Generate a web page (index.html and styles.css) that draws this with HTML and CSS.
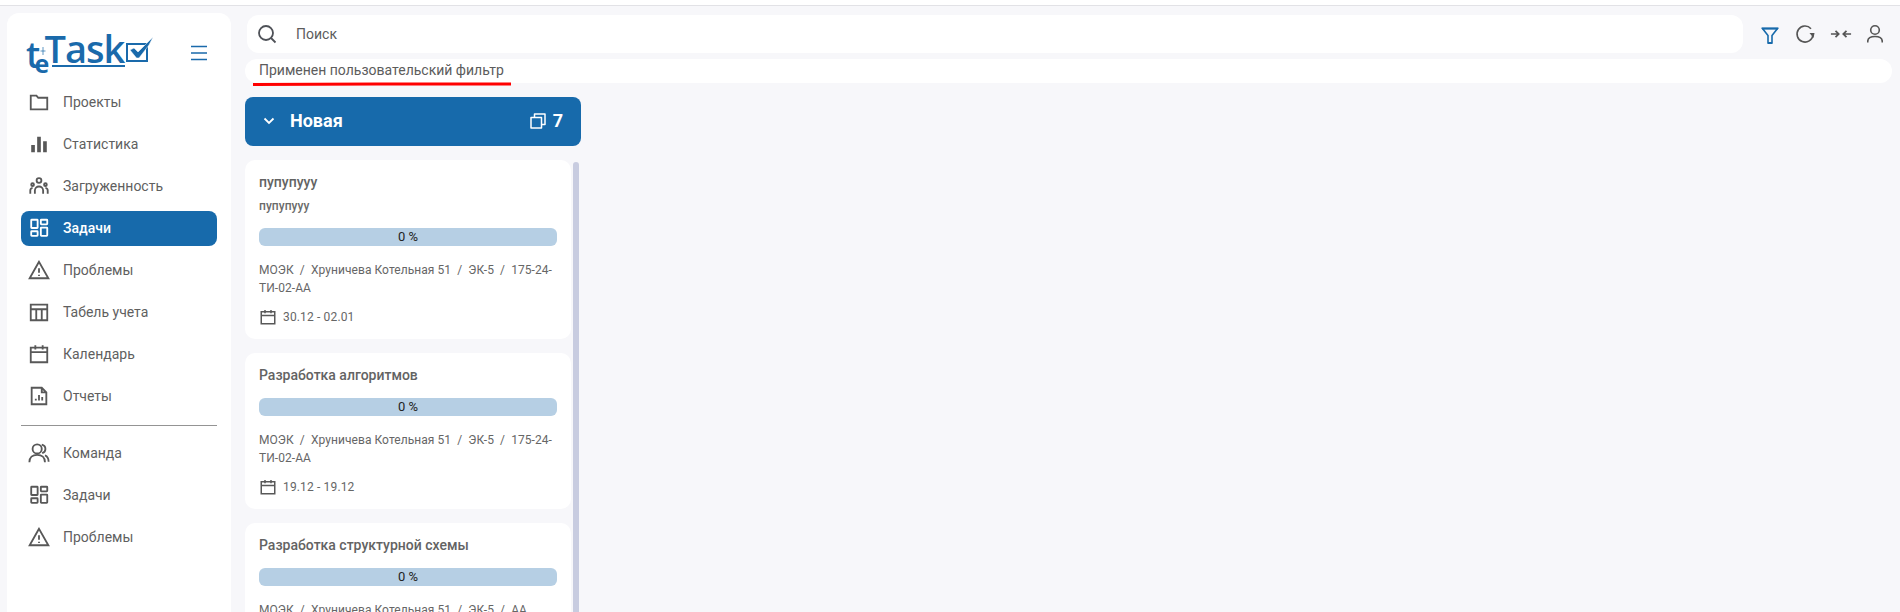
FILE: index.html
```html
<!DOCTYPE html>
<html lang="en">
<head>
<meta charset="UTF-8">
<meta name="viewport" content="width=device-width, initial-scale=1.0">
<title>teTask</title>
<link rel="stylesheet" href="styles.css">
</head>
<body>

<!-- Shared icons -->
<svg class="sprite" xmlns="http://www.w3.org/2000/svg">
  <symbol id="i-folder" viewBox="0 0 24 24"><path d="M3 5h6.200l2 2.400H21V20H3z"/></symbol>
  <symbol id="i-stats" viewBox="0 0 24 24"><path class="solid" d="M3.500 13h4v8h-4zM10 4h4v17h-4zM16.500 9h4v12h-4z"/></symbol>
  <symbol id="i-load" viewBox="0 0 24 24"><circle cx="12" cy="6" r="2.600"/><circle cx="5" cy="10.500" r="1.500"/><circle cx="19" cy="10.500" r="1.500"/><path d="M7.500 20.500v-3.500a4.500 4.500 0 0 1 9 0v3.500M2.500 20.500V17a3 3 0 0 1 2.500-3M21.500 20.500V17a3 3 0 0 0-2.500-3"/></symbol>
  <symbol id="i-tasks" viewBox="0 0 24 24"><rect x="3.500" y="3" width="7" height="9" rx=".6"/><rect x="14" y="3" width="7" height="5" rx=".6"/><rect x="3.500" y="15.500" width="7" height="5" rx=".6"/><rect x="14" y="11.500" width="7" height="9" rx=".6"/></symbol>
  <symbol id="i-warn" viewBox="0 0 24 24"><path d="M12 3 1.800 21h20.400z"/><path d="M12 10v5M12 17.200v1.300"/></symbol>
  <symbol id="i-table" viewBox="0 0 24 24"><path d="M3 4h18v17H3zM3 9h18M9 9v12M15 9v12"/></symbol>
  <symbol id="i-cal" viewBox="0 0 24 24"><path d="M3 5h18v16H3zM3 10h18M8 2.500V7M16 2.500V7"/></symbol>
  <symbol id="i-report" viewBox="0 0 24 24"><path d="M4 3h11l5 5v13H4zM15 3v5h5"/><path d="M8.500 17v-2M12 17v-6M15.500 17v-4"/></symbol>
  <symbol id="i-team" viewBox="0 0 24 24"><circle cx="10" cy="7.500" r="5"/><path d="M1.500 22c0-5 3.500-8 8.500-8s8.500 3 8.500 8M15 2.800c2.500.6 4 2.500 4 4.700s-1.500 4-3.500 4.700M18.500 14.500c2.500 1 4 3.800 4 7"/></symbol>
</svg>

<!-- Top strip -->
<div class="topline"></div>

<div class="app">

  <!-- Sidebar -->
  <aside class="sidebar">
    <div class="brand">
      <svg class="logo" viewBox="0 0 130 46" width="130" height="46">
        <text><tspan class="logo-t" x="1" y="37">t</tspan><tspan class="logo-e" x="9.500" y="41.500">e</tspan><tspan class="logo-task" x="19.500" y="32">Task</tspan></text>
        <path class="logo-spark" d="M18 16v8M15.500 20h5"/>
        <path class="logo-line" d="M27 35h73"/>
        <path class="logo-box" d="M102 13h20v17h-20z"/>
        <path class="logo-check" d="M105 19l4-2 4 4 15-15-4 8-10 13h-2.500z"/>
      </svg>
      <svg class="burger" viewBox="0 0 16 16" width="16" height="16"><path d="M0 1.500h16M0 8h16M0 14.500h16"/></svg>
    </div>

    <nav class="menu">
      <a class="menu-item"><svg class="icon"><use href="#i-folder"/></svg>Проекты</a>
      <a class="menu-item"><svg class="icon"><use href="#i-stats"/></svg>Статистика</a>
      <a class="menu-item"><svg class="icon"><use href="#i-load"/></svg>Загруженность</a>
      <a class="menu-item active"><svg class="icon"><use href="#i-tasks"/></svg>Задачи</a>
      <a class="menu-item"><svg class="icon"><use href="#i-warn"/></svg>Проблемы</a>
      <a class="menu-item"><svg class="icon"><use href="#i-table"/></svg>Табель учета</a>
      <a class="menu-item"><svg class="icon"><use href="#i-cal"/></svg>Календарь</a>
      <a class="menu-item"><svg class="icon"><use href="#i-report"/></svg>Отчеты</a>
    </nav>
    <hr class="menu-divider">
    <nav class="menu">
      <a class="menu-item"><svg class="icon"><use href="#i-team"/></svg>Команда</a>
      <a class="menu-item"><svg class="icon"><use href="#i-tasks"/></svg>Задачи</a>
      <a class="menu-item"><svg class="icon"><use href="#i-warn"/></svg>Проблемы</a>
    </nav>
  </aside>

  <!-- Main area -->
  <main class="main">
    <div class="toolbar">
      <div class="search">
        <svg class="search-icon" viewBox="0 0 20 20" width="20" height="20"><circle cx="9" cy="9" r="7"/><path d="m14 14 4.500 4.500"/></svg>
        <span>Поиск</span>
      </div>
      <div class="tools">
        <svg class="tool tool-blue" viewBox="0 0 20 20"><path d="M2.500 4.500h15L12 11.500V19H8v-7.500z"/><path class="tool-thick" d="M2 4.500h16M8 19h4"/></svg>
        <svg class="tool" viewBox="0 0 20 20"><path d="M18 11A8 8 0 1 1 16 4.700"/><path class="solid" d="M14.500 9h5l-1 5z"/></svg>
        <svg class="tool tool-wide" viewBox="0 0 24 20"><path d="M1 10h8M6 6.500 9.500 10 6 13.500M23 10h-8M18 6.500 14.500 10l3.500 3.500"/></svg>
        <svg class="tool tool-user" viewBox="0 0 16 20"><circle cx="8" cy="6" r="4.300"/><path d="M.75 18.500v-1c0-3 2.800-5 7.250-5s7.250 2 7.250 5v1"/></svg>
      </div>
    </div>

    <div class="filter-note">
      <span>Применен пользовательский фильтр</span>
      <svg class="red-line" viewBox="0 0 258 4" width="258" height="4"><path d="M0 2.500C80 2 180 2 258 2"/></svg>
    </div>

    <section class="column">
      <header class="column-head">
        <svg class="chevron" viewBox="0 0 12 8" width="12" height="8"><path d="m1.500 1.500 4.500 4.500 4.500-4.500"/></svg>
        <span class="column-title">Новая</span>
        <svg class="copies" viewBox="0 0 16 16" width="16" height="16"><path d="M1 4.500h10.500V15H1zM4.500 4.500V1H15v10.500h-3.500"/></svg>
        <span class="column-count">7</span>
      </header>

      <div class="column-body">
        <div class="cards">
          <article class="card">
            <h3>пупупууу</h3>
            <p class="card-sub">пупупууу</p>
            <div class="progress">0 %</div>
            <p class="card-path">МОЭК &nbsp;/&nbsp; Хруничева Котельная 51 &nbsp;/&nbsp; ЭК-5 &nbsp;/&nbsp; 175-24-ТИ-02-АА</p>
            <div class="card-date"><svg class="icon-sm"><use href="#i-cal"/></svg>30.12 - 02.01</div>
          </article>
          <article class="card">
            <h3>Разработка алгоритмов</h3>
            <div class="progress">0 %</div>
            <p class="card-path">МОЭК &nbsp;/&nbsp; Хруничева Котельная 51 &nbsp;/&nbsp; ЭК-5 &nbsp;/&nbsp; 175-24-ТИ-02-АА</p>
            <div class="card-date"><svg class="icon-sm"><use href="#i-cal"/></svg>19.12 - 19.12</div>
          </article>
          <article class="card">
            <h3>Разработка структурной схемы</h3>
            <div class="progress">0 %</div>
            <p class="card-path">МОЭК &nbsp;/&nbsp; Хруничева Котельная 51 &nbsp;/&nbsp; ЭК-5 &nbsp;/&nbsp; АА</p>
          </article>
        </div>
        <div class="scrollbar"></div>
      </div>
    </section>
  </main>
</div>

</body>
</html>
```

FILE: styles.css
```css
/* Reset */
* {
  margin: 0;
  padding: 0;
  box-sizing: border-box;
}
html, body {
  height: 612px;
  overflow: hidden;
  font-family: Roboto, "Liberation Sans", sans-serif;
  font-size: 14px;
  color: #5c5c5c;
  background: #f7f7fa;
}
.sprite {
  position: absolute;
  width: 0;
  height: 0;
}
svg {
  fill: none;
  stroke: currentColor;
  stroke-width: 2;
  display: block;
}
svg .solid {
  fill: currentColor;
  stroke: none;
}

.topline {
  height: 6px;
  background: #fff;
  border-bottom: 1px solid #e2e2e6;
}
.app {
  display: flex;
  height: 606px;
  padding: 7px 8px 0 7px;
}

/* Sidebar */
.sidebar {
  width: 224px;
  flex-shrink: 0;
  padding: 0 14px;
  background: #fff;
  border-radius: 12px 12px 0 0;
}
.brand {
  display: flex;
  align-items: flex-start;
  height: 72px;
  padding: 18px 10px 0 4px;
  justify-content: space-between;
}
.logo {
  overflow: visible;
  color: #1a6aab;
}
.logo text {
  fill: #1a6aab;
  stroke: none;
  font-family: "Open Sans", sans-serif;
}
.logo-t { font-size: 36px; font-weight: 600; }
.logo-e { font-size: 25px; font-weight: 700; }
.logo-task { font-size: 38px; font-weight: 600; letter-spacing: -1px; }
.logo-spark { stroke-width: .7; }
.logo-check { fill: #1a6aab; stroke: #fff; stroke-width: .5; }
.burger {
  margin-top: 14px;
  color: #1a6aab;
  stroke-width: 1.600;
}
.menu {
  display: flex;
  flex-direction: column;
  gap: 7px;
}
.menu-item {
  display: flex;
  align-items: center;
  height: 35px;
  padding: 0 0 1px 7px;
  border-radius: 8px;
  color: #5f5f5f;
}
.menu-item.active {
  background: #176aab;
  color: #fff;
  font-weight: 500;
}
.icon {
  width: 22px;
  height: 22px;
  margin-right: 13px;
  flex-shrink: 0;
  color: #585858;
}
.active .icon {
  color: #fff;
}
.menu-divider {
  margin: 11px 0 10px;
  border: 0;
  border-top: 1px solid #949494;
}

/* Toolbar */
.main {
  flex: 1;
  margin-left: 14px;
  min-width: 0;
}
.toolbar {
  display: flex;
  align-items: center;
  height: 38px;
  margin-top: 2px;
  padding-left: 2px;
}
.search {
  display: flex;
  align-items: center;
  flex: 1;
  height: 38px;
  padding-left: 10px;
  background: #fff;
  border-radius: 12px;
  color: #5c5c5c;
}
.search-icon {
  margin-right: 19px;
  color: #4e5157;
  stroke-width: 1.800;
}
.tools {
  display: flex;
  align-items: center;
  gap: 15px;
  width: 149px;
  padding-left: 17px;
  color: #555;
}
.tool {
  width: 20px;
  height: 20px;
  stroke-width: 1.600;
}
.tool-wide {
  width: 22px;
  stroke-width: 1.900;
}
.tool-user {
  width: 16px;
}
.tool-blue {
  color: #176aab;
}
.tool-thick {
  stroke-width: 2.200;
}

/* Filter note */
.filter-note {
  position: relative;
  height: 24px;
  margin-top: 6px;
  padding-left: 14px;
  line-height: 23px;
  background: #fff;
  border-radius: 12px;
}
.red-line {
  position: absolute;
  left: 8px;
  top: 23px;
  color: #f00;
  stroke-width: 3;
}

/* Column */
.column {
  width: 336px;
  margin-top: 14px;
}
.column-head {
  display: flex;
  align-items: center;
  height: 49px;
  padding: 0 18px 2px 18px;
  background: #176aab;
  border-radius: 8px;
  color: #fff;
}
.chevron {
  stroke-width: 1.800;
  margin-right: 15px;
}
.column-title {
  flex: 1;
  font-size: 18px;
  font-weight: 700;
}
.copies {
  stroke-width: 1.500;
  margin-right: 7px;
  stroke-linejoin: round;
}
.column-count {
  font-size: 18px;
  font-weight: 700;
}
.column-body {
  display: flex;
  gap: 2px;
  margin-top: 14px;
}
.cards {
  width: 326px;
  display: flex;
  flex-direction: column;
  gap: 14px;
}
.scrollbar {
  width: 6px;
  height: 460px;
  margin-top: 2px;
  background: #c8cce0;
  border-radius: 3px 3px 0 0;
}

/* Cards */
.card {
  padding: 14px 14px 13px;
  background: #fff;
  border-radius: 10px;
}
.card h3 {
  font-size: 14px;
  font-weight: 500;
  line-height: 16px;
  color: #636363;
}
.card-sub {
  margin-top: 9px;
  font-size: 12px;
  font-weight: 500;
  line-height: 14px;
  letter-spacing: .05px;
  color: #6a6a6a;
}
.progress {
  height: 18px;
  margin-top: 15px;
  background: #b6cfe4;
  border-radius: 6px;
  font-size: 13px;
  line-height: 18px;
  text-align: center;
  color: #222;
}
.card-path {
  margin-top: 15px;
  font-size: 12px;
  line-height: 18px;
  letter-spacing: .06px;
  color: #666;
}
.card-date {
  display: flex;
  align-items: center;
  margin-top: 11px;
  font-size: 12px;
  line-height: 18px;
  letter-spacing: .15px;
  color: #666;
}
.icon-sm {
  width: 18px;
  height: 18px;
  margin-right: 6px;
  color: #585858;
  stroke-width: 2;
}
```
